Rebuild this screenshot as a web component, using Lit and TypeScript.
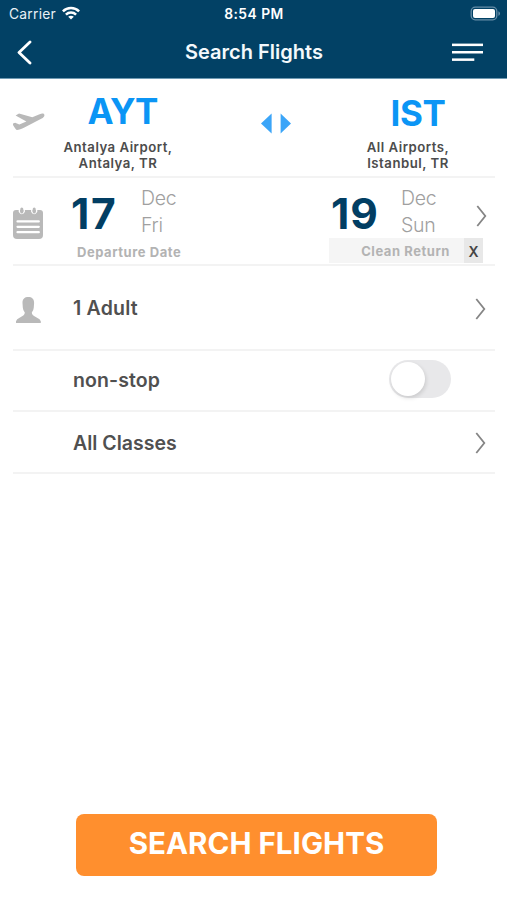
import { LitElement, html, css } from "lit";
import { customElement, property, state } from "lit/decorators.js";

@customElement("row-chevron")
class RowChevron extends LitElement {
  static styles = css`
    :host { display: block; width: 12px; height: 24px; }
    svg { display: block; }
  `;
  render() {
    return html`<svg width="12" height="24" viewBox="0 0 12 24" fill="none" stroke="#858585" stroke-width="1.8">
      <path d="M1.3 2 L9.3 12 L1.3 22" />
    </svg>`;
  }
}

@customElement("status-bar")
class StatusBar extends LitElement {
  static styles = css`
    :host {
      display: grid; grid-template-columns: 1fr auto 1fr; align-items: center;
      height: 28px; padding: 0 6px 0 9px; color: #e9f1f6;
      font-size: 13.8px; line-height: 28px;
    }
    .left { display: flex; align-items: center; gap: 6px; letter-spacing: 0.25px; }
    .time { font-weight: 600; letter-spacing: 0.5px; color: #fff; padding-right: 2px; }
    .right { display: flex; justify-content: flex-end; }
    svg { display: block; }
    .left svg { margin-top: -2px; }
  `;
  render() {
    return html`
      <div class="left"><span>Carrier</span>
        <svg width="18" height="14" viewBox="0 0 18 14" fill="none" stroke="#fff" stroke-width="2.5">
          <path d="M0.9 5.4 C5.4 0.9 12.6 0.9 17.1 5.4" />
          <path d="M3.9 8.7 C6.8 5.9 11.2 5.9 14.1 8.7" />
          <path d="M9 13.6 L6.2 10.8 C7.8 9.4 10.2 9.4 11.8 10.8 Z" fill="#fff" stroke="none" />
        </svg>
      </div>
      <div class="time">8:54 PM</div>
      <div class="right">
        <svg width="31" height="16" viewBox="0 0 31 16">
          <rect x="1.2" y="1.2" width="25.6" height="12.6" rx="4" fill="none" stroke="#668da7" stroke-width="1.3" />
          <rect x="3" y="3" width="22" height="9" rx="2" fill="#fff" />
          <path d="M28.4 5.2 C30.6 6.2 30.6 8.8 28.4 9.8 Z" fill="#668da7" />
        </svg>
      </div>`;
  }
}

@customElement("nav-bar")
class NavBar extends LitElement {
  static styles = css`
    :host {
      display: grid; grid-template-columns: 1fr auto 1fr; align-items: center;
      height: 49px; padding: 0 23px 0 16px; color: #f4f9fc;
    }
    .title { font-size: 20px; line-height: 49px; font-weight: 600; letter-spacing: 0; padding-left: 8px; }
    .menu { display: flex; justify-content: flex-end; }
    svg { display: block; }
  `;
  render() {
    return html`
      <svg width="18" height="26" viewBox="0 0 18 26" fill="none" stroke="#fff" stroke-width="2.8" stroke-linecap="round" stroke-linejoin="round">
        <path d="M14 1.9 L3 12.4 L14 23.1" />
      </svg>
      <div class="title">Search Flights</div>
      <div class="menu">
        <svg width="32" height="20" viewBox="0 0 32 20" fill="#fff">
          <rect x="0" y="0.6" width="31" height="2.5" />
          <rect x="0" y="8" width="31" height="2.5" />
          <rect x="0" y="15.4" width="22.3" height="2.5" />
        </svg>
      </div>`;
  }
}

@customElement("airport-field")
class AirportField extends LitElement {
  @property() code = "";
  @property() place = "";
  @property() city = "";
  static styles = css`
    :host { display: flex; flex-direction: column; align-items: center; text-align: center; }
    .code {
      color: #0b95f5; font-size: 35px; font-weight: 700; line-height: 44px; white-space: nowrap;
      letter-spacing: var(--code-spacing, 0); padding-top: var(--code-top, 0); padding-left: var(--code-left, 0);
    }
    .place { color: #4c4c4c; font-size: 13.2px; font-weight: 600; line-height: 16px; letter-spacing: 0.5px; white-space: nowrap; margin-top: var(--place-top, 6px); }
  `;
  render() {
    return html`<div class="code">${this.code}</div>
      <div class="place">${this.place}<br />${this.city}</div>`;
  }
}

@customElement("date-field")
class DateField extends LitElement {
  @property() day = "";
  @property() month = "";
  @property() weekday = "";
  static styles = css`
    :host { display: flex; }
    .day { width: 70px; color: #023e63; font-size: 42.5px; font-weight: 700; line-height: 53px; letter-spacing: var(--day-spacing, 0); }
    .names { color: #a0a0a0; font-size: 19.5px; font-weight: 350; line-height: 27px; margin-top: -2px; letter-spacing: -0.3px; }
  `;
  render() {
    return html`<div class="day">${this.day}</div>
      <div class="names">${this.month}<br />${this.weekday}</div>`;
  }
}

@customElement("app-root")
class AppRoot extends LitElement {
  @state() private nonStop = false;

  static styles = css`
    :host {
      display: flex; flex-direction: column; height: 900px; background: #fff; overflow: hidden;
      font-family: Inter, "Liberation Sans", sans-serif;
    }
    .header { height: 79px; background: #024165; border-bottom: 1px solid #6f9ab3; box-sizing: border-box; }
    .form { padding: 0 12px 0 13px; }
    .row { display: flex; align-items: center; box-sizing: border-box; border-bottom: 2px solid #f3f3f3; }
    .icon { width: 60px; flex: none; }
    .icon svg, .swap { display: block; }
    .grow { flex: 1; }
    .route { height: 99px; align-items: flex-start; }
    .route .icon { width: 34px; padding-top: 31px; }
    .from { width: 142px; padding-top: 10px; --code-spacing: -0.9px; --code-left: 9px; }
    .to { width: 142px; padding-top: 10px; --code-top: 2px; --code-left: 20px; --place-top: 4px; --code-spacing: -0.4px; margin-left: 46px; }
    .swap { margin: 33px 0 0 72px; }
    .dates { height: 88px; align-items: flex-start; }
    .dates .icon { padding-top: 28px; width: 58px; }
    .depart { padding-top: 9px; width: 258px; --day-spacing: 1.6px; }
    .return { padding-top: 9px; width: 154px; --day-spacing: 1px; }
    .return date-field { padding-left: 2px; }
    .caption { font-size: 13px; font-weight: 700; letter-spacing: 0.55px; color: #b3b3b3; }
    .depart .caption { padding-left: 6px; line-height: 24px; }
    .clean { display: flex; height: 25px; margin-top: -2px; background: #f5f5f5; }
    .clean .caption { flex: 1; text-align: right; padding-right: 14px; line-height: 26px; }
    .x { width: 19px; background: #e8e8e8; color: #444; font-size: 14px; font-weight: 600; line-height: 27px; text-align: center; }
    .dates row-chevron { margin-top: 26px; margin-left: -7px; }
    .label { font-size: 19.5px; font-weight: 600; color: #505050; letter-spacing: 0; }
    .adult { height: 85px; padding-right: 8px; }
    .adult .label { padding-top: 1px; letter-spacing: 0.2px; }
    .adult .icon svg { margin-top: 2px; }
    .class .label { padding-top: 1px; }
    .stop { height: 61px; padding: 0 44px 3px 0; }
    .stop .label { letter-spacing: 0.1px; padding-top: 2px; }
    .class { height: 62px; padding-right: 8px; }
    .adult row-chevron, .class row-chevron { margin-top: 2px; }
    .switch { box-sizing: border-box; width: 62px; height: 38px; border-radius: 19px; background: #e8e8ea; border: 0; padding: 2px; display: flex; }
    .switch.on { background: #34c759; justify-content: flex-end; }
    .knob { width: 34px; height: 34px; border-radius: 50%; background: #fff; box-shadow: 1px 2px 4px #0002; }
    .footer { margin-top: auto; padding: 0 70px 24px 76px; }
    .search {
      display: block; width: 361px; height: 62px; border: 0; border-radius: 8px; background: #ff8f2e; color: #fff;
      font-family: inherit; font-size: 29.5px; font-weight: 650; letter-spacing: 0.05px; line-height: 58px; padding: 0 0 4px; text-align: center; white-space: nowrap;
    }
  `;

  render() {
    return html`
      <div class="header"><status-bar></status-bar><nav-bar></nav-bar></div>
      <div class="form">
        <div class="row route">
          <div class="icon">
            <svg width="32" height="20" viewBox="0 0 32 20" fill="#b9b9b9">
              <path d="M-0.8 13.6 L2.2 12.8 L6.3 14.5 L13.4 11.6 L2.6 5.6 L6 3.4 L19.3 7.3 L26.6 4.2 C29 3.1 31 3.2 31.4 4.9 C31.6 6.4 30.4 7.6 28.7 8.6 L11.4 17.6 C8.6 19 5.8 20 4.1 20 C2.8 19.8 1.5 17.4 -0.8 13.6 Z" />
            </svg>
          </div>
          <airport-field class="from" code="AYT" place="Antalya Airport," city="Antalya, TR"></airport-field>
          <svg class="swap" width="30" height="22" viewBox="0 0 30 22" fill="#3ba5f8">
            <path d="M10.6 1.5 V21.5 L0 11.5 Z" /><path d="M19.6 1.5 V21.5 L30 11.5 Z" />
          </svg>
          <airport-field class="to" code="IST" place="All Airports," city="Istanbul, TR"></airport-field>
        </div>
        <div class="row dates">
          <div class="icon">
            <svg width="31" height="33" viewBox="0 0 31 33">
              <path d="M3 4 H27 Q30 4 30 7 V29 Q30 33 26 33 H4 Q0 33 0 29 V7 Q0 4 3 4 Z" fill="#b9b9b9" />
              <g fill="none" stroke="#fff" stroke-width="1.4">
                <path d="M6.4 2 V5.6 Q8.8 9.4 11.2 5.6 V2" /><path d="M18.8 2 V5.6 Q21.2 9.4 23.6 5.6 V2" />
              </g>
              <path d="M8.8 3 V6 M21.2 3 V6" stroke="#b9b9b9" stroke-width="3" stroke-linecap="round" />
              <path d="M4.5 15.4 H25.8 M4.5 20.8 H25.8 M4.5 26.2 H25.8" stroke="#fff" stroke-width="2.2" stroke-linecap="round" />
            </svg>
          </div>
          <div class="depart">
            <date-field day="17" month="Dec" weekday="Fri"></date-field>
            <div class="caption">Departure Date</div>
          </div>
          <div class="return">
            <date-field day="19" month="Dec" weekday="Sun"></date-field>
            <div class="clean"><span class="caption">Clean Return</span><span class="x">X</span></div>
          </div>
          <row-chevron></row-chevron>
        </div>
        <div class="row adult">
          <div class="icon">
            <svg width="30" height="28" viewBox="0 0 30 28" fill="#b9b9b9">
              <path d="M3 28 V26.2 Q3.4 24.2 7 22.4 Q11.8 20.6 11.8 17.6 Q10 15.6 9.8 12.6 L9.5 8 C9.4 3.8 11.8 2 15.3 2 C18.8 2 21.2 3.8 21.1 8 L20.8 12.6 Q20.6 15.6 18.8 17.6 Q18.8 20.6 23.6 22.4 Q27.4 24.2 27.8 26.2 V28 Z" />
            </svg>
          </div>
          <div class="label grow">1 Adult</div>
          <row-chevron></row-chevron>
        </div>
        <div class="row stop">
          <div class="icon"></div>
          <div class="label grow">non-stop</div>
          <button class="switch ${this.nonStop ? "on" : ""}" aria-label="non-stop" @click=${() => (this.nonStop = !this.nonStop)}><span class="knob"></span></button>
        </div>
        <div class="row class">
          <div class="icon"></div>
          <div class="label grow">All Classes</div>
          <row-chevron></row-chevron>
        </div>
      </div>
      <div class="footer"><button class="search">SEARCH FLIGHTS</button></div>
    `;
  }
}
